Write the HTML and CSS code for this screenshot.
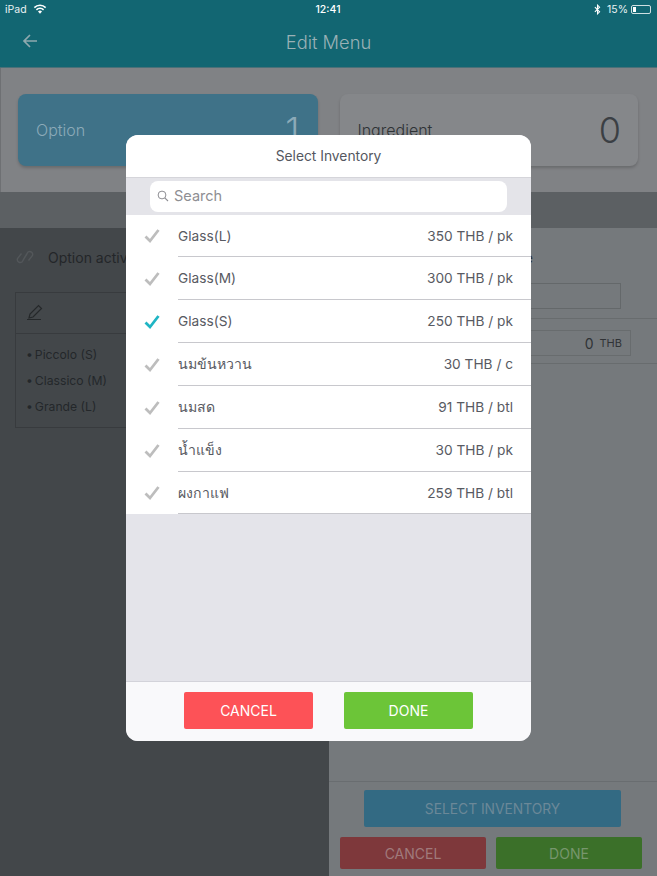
FILE: index.html
```html
<!DOCTYPE html>
<html lang="en">
<head>
<meta charset="utf-8">
<title>Edit Menu</title>
<link rel="stylesheet" href="styles.css">
</head>
<body>
<div class="page">
  <header class="header">
    <div class="status">
      <div class="status-left">
        <span>iPad</span>
        <svg class="wifi" viewBox="0 0 16 12" width="14" height="10"><path d="M8 11.6 5.6 9a3.4 3.4 0 0 1 4.8 0z" fill="#fff"/><path d="M3.7 7a6 6 0 0 1 8.6 0M1.2 4.3a9.6 9.6 0 0 1 13.6 0" fill="none" stroke="#fff" stroke-width="1.9"/></svg>
      </div>
      <span class="status-time">12:41</span>
      <div class="status-right">
        <svg class="bt" viewBox="0 0 8 12" width="7" height="11"><path d="M1 3.2 6.4 8.6 4 11V1l2.4 2.4L1 8.8" fill="none" stroke="#fff" stroke-width="1.2"/></svg>
        <span>15%</span>
        <span class="battery"><span class="battery-fill"></span></span>
      </div>
    </div>
    <div class="titlebar">
      <svg class="back" viewBox="0 0 16 16" width="16" height="16"><path d="M15 8H2M8 2 2 8l6 6" fill="none" stroke="#8fa9ae" stroke-width="1.7"/></svg>
      <h1 class="title">Edit Menu</h1>
    </div>
  </header>

  <section class="summary">
    <div class="card card-blue"><span class="card-label">Option</span><span class="card-num">1</span></div>
    <div class="card card-gray"><span class="card-label">Ingredient</span><span class="card-num">0</span></div>
  </section>
  <div class="band"></div>

  <main class="split">
    <div class="left">
      <div class="active-row">
        <svg class="link" viewBox="0 0 20 20" width="20" height="20"><path d="M8 13l5-8a3 3 0 0 1 4.500 3.500l-4 5M12 7l-5 8a3 3 0 0 1-4.500-3.500l4-5" fill="none" stroke="#53575a" stroke-width="1.400"/></svg>
        <span class="active-text">Option active</span>
      </div>
      <div class="option-box">
        <div class="option-head">
          <svg viewBox="0 0 18 18" width="18" height="18"><path d="M3 15l1-4L12.500 2.500l3 3L7 14zM1 16.500h14" fill="none" stroke="#25282a" stroke-width="1.200"/></svg>
        </div>
        <ul class="option-list">
          <li>Piccolo (S)</li>
          <li>Classico (M)</li>
          <li>Grande (L)</li>
        </ul>
      </div>
    </div>
    <div class="right">
      <div class="right-body">
        <div class="right-label">Option Name</div>
        <div class="name-field"></div>
        <div class="price-row"><div class="price-field"><span class="price-num">0</span><span class="price-unit">THB</span></div></div>
      </div>
      <div class="right-foot">
        <div class="btn-select">SELECT INVENTORY</div>
        <div class="foot-row">
          <div class="btn-dim btn-dim-red">CANCEL</div>
          <div class="btn-dim btn-dim-green">DONE</div>
        </div>
      </div>
    </div>
  </main>

  <div class="modal">
    <div class="modal-title">Select Inventory</div>
    <div class="search-wrap">
      <div class="search">
        <svg viewBox="0 0 12 12" width="12" height="12"><circle cx="5" cy="5" r="3.900" fill="none" stroke="#8e8e93" stroke-width="1"/><path d="M7.800 7.800 11 11" stroke="#8e8e93" stroke-width="1.100"/></svg>
        <span>Search</span>
      </div>
    </div>
    <ul class="items">
      <li class="item"><svg class="check" viewBox="0 0 16 16"><path d="M1.500 8.500 6 13 14.500 2" fill="none" stroke-width="2.800"/></svg><div class="item-body"><span>Glass(L)</span><span>350 THB / pk</span></div></li>
      <li class="item"><svg class="check" viewBox="0 0 16 16"><path d="M1.500 8.500 6 13 14.500 2" fill="none" stroke-width="2.800"/></svg><div class="item-body"><span>Glass(M)</span><span>300 THB / pk</span></div></li>
      <li class="item item-on"><svg class="check" viewBox="0 0 16 16"><path d="M1.500 8.500 6 13 14.500 2" fill="none" stroke-width="2.800"/></svg><div class="item-body"><span>Glass(S)</span><span>250 THB / pk</span></div></li>
      <li class="item"><svg class="check" viewBox="0 0 16 16"><path d="M1.500 8.500 6 13 14.500 2" fill="none" stroke-width="2.800"/></svg><div class="item-body"><span class="thai">นมข้นหวาน</span><span>30 THB / c</span></div></li>
      <li class="item"><svg class="check" viewBox="0 0 16 16"><path d="M1.500 8.500 6 13 14.500 2" fill="none" stroke-width="2.800"/></svg><div class="item-body"><span class="thai">นมสด</span><span>91 THB / btl</span></div></li>
      <li class="item"><svg class="check" viewBox="0 0 16 16"><path d="M1.500 8.500 6 13 14.500 2" fill="none" stroke-width="2.800"/></svg><div class="item-body"><span class="thai">น้ำแข็ง</span><span>30 THB / pk</span></div></li>
      <li class="item"><svg class="check" viewBox="0 0 16 16"><path d="M1.500 8.500 6 13 14.500 2" fill="none" stroke-width="2.800"/></svg><div class="item-body"><span class="thai">ผงกาแฟ</span><span>259 THB / btl</span></div></li>
    </ul>
    <div class="modal-foot">
      <button class="modal-btn modal-cancel">CANCEL</button>
      <button class="modal-btn modal-done">DONE</button>
    </div>
  </div>
</div>
</body>
</html>
```

FILE: styles.css
```css
* { box-sizing: border-box; }
html, body { margin: 0; padding: 0; }
body {
  font-family: Inter, "Noto Sans", "DejaVu Sans", sans-serif;
  background: #43474a;
  overflow: hidden;
}
.page {
  position: relative;
  width: 657px;
  height: 876px;
  display: flex;
  flex-direction: column;
  overflow: hidden;
}

/* Header */
.header { height: 68px; background: #126672; flex: none; border-bottom: 1px solid #4a7078; }
.status {
  height: 18px;
  padding: 0 6px 0 5px;
  display: grid;
  grid-template-columns: 1fr auto 1fr;
  align-items: center;
  color: #e9f2f3;
  font-size: 10.500px;
}
.status-left { display: flex; align-items: center; gap: 6px; }
.status-time { font-weight: 500; font-size: 10.500px; color: #fff; }
.status-right { display: flex; align-items: center; justify-content: flex-end; gap: 3px; }
.bt { margin-right: 3px; }
.battery {
  width: 20px; height: 9px;
  border: 1px solid #cfe0e2;
  border-radius: 2px;
  padding: 1px;
  display: block;
}
.battery-fill { display: block; width: 3px; height: 100%; background: #fff; }
.titlebar {
  position: relative;
  height: 49px;
  display: flex;
  align-items: center;
  justify-content: center;
}
.back { position: absolute; left: 22px; top: 15px; }
.title { margin: 0 0 1px; font-size: 18.300px; font-weight: 300; color: #9ab1b6; }

/* Summary */
.summary {
  flex: none;
  height: 124px;
  background: #808285;
  border-left: 1px solid #6e7073;
  padding: 26px 19px 26px 17px;
  display: flex;
  gap: 22px;
}
.card {
  flex: 1;
  height: 72px;
  border-radius: 8px;
  display: flex;
  align-items: center;
  justify-content: space-between;
  padding: 0 18px;
  box-shadow: 0 2px 3px rgba(0,0,0,.18);
}
.card-blue { background: #3f7288; color: #8caab8; }
.card-gray { background: #85878a; color: #2f3336; padding-right: 17px; }
.card-label { font-size: 16px; font-weight: 300; }
.card-num { font-size: 36px; font-weight: 300; }
.card-gray .card-num { color: #3b3f44; }
.band { flex: none; height: 36px; background: #5c6063; }

/* Background split */
.split { flex: 1; display: flex; min-height: 0; }
.left { width: 329px; background: #43474a; padding: 0 15px; flex: none; }
.active-row { height: 64px; display: flex; align-items: center; gap: 13px; padding-bottom: 6px; }
.link { flex: none; }
.active-text { font-size: 14px; color: #232629; }
.option-box { width: 300px; height: 136px; border: 1px solid #383b3e; }
.option-head { height: 41px; padding: 10px 0 0 10px; border-bottom: 1px solid #383b3e; }
.option-list { list-style: none; margin: 0; padding: 8px 0 0 10px; font-size: 12.200px; color: #24272a; }
.option-list li { height: 26px; line-height: 26px; }
.option-list li::before { content: "•"; margin-right: 2px; }

.right { flex: 1; background: #75797c; display: flex; flex-direction: column; }
.right-body { flex: 1; position: relative; padding-top: 21px; }
.right-label { text-align: right; padding-right: 124px; font-size: 14px; color: #2c2f31; height: 34px; }
.name-field { height: 26px; border: 1px solid #64686a; width: 292px; }
.price-row { margin-top: 9px; height: 46px; border: solid #686c6e; border-width: 1px 0; padding-top: 11px; }
.price-field {
  width: 302px; height: 26px;
  border: 1px solid #686c6e;
  display: flex;
  align-items: center;
  justify-content: flex-end;
  gap: 6px;
  padding-right: 8px;
  color: #303336;
}
.price-num { font-size: 14px; }
.price-unit { font-size: 11px; }
.right-foot { flex: none; height: 95px; border-top: 1px solid #696d70; padding: 8px 0 0 11px; display: flex; flex-direction: column; align-items: stretch; }
.btn-select {
  width: 257px; height: 37px; margin-left: 24px;
  background: #336a83; color: #6b8898; border-radius: 2px;
  font-size: 13.800px;
  display: flex; align-items: center; justify-content: center;
}
.foot-row { display: flex; gap: 10px; margin-top: 10px; }
.btn-dim {
  width: 146px; height: 32px; border-radius: 2px; font-size: 14px;
  display: flex; align-items: center; justify-content: center;
}
.btn-dim-red { background: #7e383b; color: #a07a7b; }
.btn-dim-green { background: #3b7029; color: #77966d; }

/* Modal */
.modal {
  position: absolute;
  left: 126px; top: 135px;
  width: 405px; height: 606px;
  border-radius: 12px;
  background: #e4e4ea;
  overflow: hidden;
  display: flex;
  flex-direction: column;
}
.modal-title {
  flex: none; height: 43px;
  background: #fff;
  border-bottom: 1px solid #d5d5da;
  display: flex; align-items: center; justify-content: center;
  font-size: 13.800px; color: #54575f;
}
.search-wrap { flex: none; height: 37px; padding: 3px 24px; background: #e4e4e9; }
.search {
  height: 31px; border-radius: 8px; background: #fff;
  display: flex; align-items: center; gap: 5px; padding: 0 0 2px 7px;
  color: #8e8e93; font-size: 14.500px;
}
.items { list-style: none; margin: 0; padding: 0; background: #fff; flex: none; }
.item { height: 43px; display: flex; align-items: center; padding-left: 18px; }
.item:first-child, .item:last-child { height: 42px; }
.check { width: 16px; height: 16px; margin-right: 18px; flex: none; stroke: #bdbdbd; }
.item-on .check { stroke: #1fb5c4; }
.item-body {
  flex: 1; align-self: stretch;
  display: flex; align-items: center; justify-content: space-between;
  padding-right: 18px;
  border-bottom: 1px solid #c8c8cd;
  font-size: 13.700px; color: #585a62;
}
.thai { font-size: 14.100px; }
.modal-foot {
  margin-top: auto; flex: none;
  height: 60px;
  background: #f9f9fb;
  border-top: 1px solid #d3d3da;
  padding: 10px 0 0 58px;
  display: flex; gap: 31px;
}
.modal-btn {
  width: 129px; height: 37px; border: 0; border-radius: 2px;
  color: #fff; font: inherit; font-size: 14px;
  padding: 0;
}
.modal-cancel { background: #fd5257; }
.modal-done { background: #6cc538; }
```
